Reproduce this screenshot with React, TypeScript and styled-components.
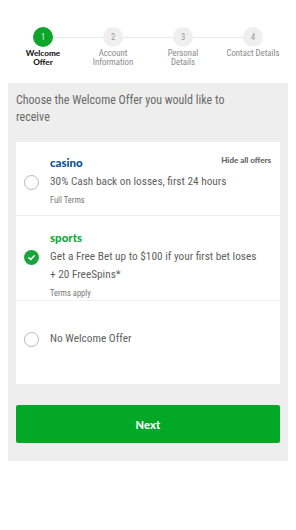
import React from "react";
import styled, { createGlobalStyle } from "styled-components";

const Global = createGlobalStyle`
  html, body { margin: 0; padding: 0; background: #fff; }
  body { font-family: "Roboto", "Lato", sans-serif; font-stretch: condensed; color: #555; }
  * { box-sizing: border-box; }
`;

const Page = styled.div`
  width: 296px;
  height: 530px;
  background: #fff;
  padding-top: 27px;
`;

const Stepper = styled.div`
  display: grid;
  grid-template-columns: repeat(4, 70px);
  padding: 0 8px;
  position: relative;
  height: 56px;
`;

const StepLine = styled.div`
  position: absolute;
  left: 43px;
  right: 43px;
  top: 10px;
  height: 1px;
  background: #e8e8e8;
`;

const Step = styled.div`
  display: flex;
  flex-direction: column;
  align-items: center;
  position: relative;
  z-index: 1;
`;

const StepCircle = styled.div<{ $active?: boolean }>`
  width: 20px;
  height: 20px;
  border-radius: 50%;
  background: ${(p) => (p.$active ? "#0fa52a" : "#efefef")};
  color: ${(p) => (p.$active ? "#d8f5dc" : "#9a9a9a")};
  font-size: 8.5px;
  display: flex;
  align-items: center;
  justify-content: center;
`;

const StepLabel = styled.div<{ $active?: boolean }>`
  margin-top: 2px;
  font-size: ${(p) => (p.$active ? "8.2px" : "8.8px")};
  line-height: 9px;
  text-align: center;
  color: ${(p) => (p.$active ? "#1a1a1a" : "#8a8a8a")};
  font-family: ${(p) => (p.$active ? '"Lato", sans-serif' : '"Roboto", sans-serif')};
  font-weight: ${(p) => (p.$active ? 900 : 400)};
  white-space: nowrap;
`;

const Panel = styled.div`
  margin: 0 8px;
  background: #eeeeee;
  padding: 9px 8px 18px;
`;

const Intro = styled.p`
  margin: 0;
  font-size: 12px;
  line-height: 16.5px;
  color: #6a6a6a;
  font-weight: 400;
`;

const Card = styled.div`
  margin-top: 17px;
  background: #fff;
`;

const Offer = styled.div<{ $h: number; $pt: number }>`
  display: grid;
  grid-template-columns: 15px 1fr;
  column-gap: 11px;
  align-content: start;
  padding: ${(p) => p.$pt}px 8px 0 8px;
  height: ${(p) => p.$h}px;
  border-bottom: 1px solid #efefef;
  position: relative;
  &:last-child { border-bottom: none; }
`;

const Radio = styled.div<{ $row?: number }>`
  grid-column: 1;
  grid-row: ${(p) => p.$row ?? 2};
  align-self: start;
  margin-top: 1.5px;
  width: 15px;
  height: 15px;
  border-radius: 50%;
  border: 1px solid #b9b9b9;
  background: #fff;
`;

const Check = styled.div`
  grid-column: 1;
  grid-row: 2;
  align-self: start;
  margin-top: 1.5px;
  width: 15px;
  height: 15px;
  border-radius: 50%;
  background: #1aa33a;
  display: flex;
  align-items: center;
  justify-content: center;
`;

const Brand = styled.div<{ $c: string }>`
  grid-column: 2;
  grid-row: 1;
  font-family: "Lato", sans-serif;
  font-weight: 900;
  font-size: 11.5px;
  line-height: 14px;
  color: ${(p) => p.$c};
  margin-bottom: 3px;
`;

const OfferText = styled.div<{ $row?: number }>`
  grid-column: 2;
  grid-row: ${(p) => p.$row ?? 2};
  font-size: 11.3px;
  line-height: 18px;
  color: #5f5f5f;
  white-space: nowrap;
`;

const Terms = styled.div`
  grid-column: 2;
  grid-row: 3;
  font-size: 8.5px;
  line-height: 10px;
  color: #777;
  margin-top: 4px;
`;

const HideAll = styled.div`
  position: absolute;
  right: 9px;
  top: 13px;
  font-family: "Lato", sans-serif;
  font-weight: 900;
  font-size: 8px;
  color: #666;
`;

const NextButton = styled.button`
  margin-top: 21px;
  width: 100%;
  height: 38px;
  border: none;
  border-radius: 2px;
  background: #03a827;
  color: #fff;
  font-family: "Lato", sans-serif;
  font-weight: 900;
  font-size: 11px;
  letter-spacing: 0.2px;
`;

const steps = [
  { n: 1, label: ["Welcome", "Offer"], active: true },
  { n: 2, label: ["Account", "Information"] },
  { n: 3, label: ["Personal", "Details"] },
  { n: 4, label: ["Contact Details"] },
];

export default function App() {
  return (
    <Page>
      <Global />
      <Stepper>
        <StepLine />
        {steps.map((s) => (
          <Step key={s.n}>
            <StepCircle $active={s.active}>{s.n}</StepCircle>
            <StepLabel $active={s.active}>
              {s.label.map((l, i) => (
                <div key={i}>{l}</div>
              ))}
            </StepLabel>
          </Step>
        ))}
      </Stepper>
      <Panel>
        <Intro>
          Choose the Welcome Offer you would like to
          <br />
          receive
        </Intro>
        <Card>
          <Offer $h={74} $pt={14}>
            <HideAll>Hide all offers</HideAll>
            <Brand $c="#0b4f8f">casino</Brand>
            <Radio />
            <OfferText>30% Cash back on losses, first 24 hours</OfferText>
            <Terms>Full Terms</Terms>
          </Offer>
          <Offer $h={85} $pt={15}>
            <Brand $c="#16a83a">sports</Brand>
            <Check>
              <svg width="9" height="9" viewBox="0 0 10 10">
                <path d="M2 5.2 L4.2 7.2 L8 3" fill="none" stroke="#fff" strokeWidth="1.6" strokeLinecap="round" strokeLinejoin="round" />
              </svg>
            </Check>
            <OfferText>
              Get a Free Bet up to $100 if your first bet loses
              <br />+ 20 FreeSpins*
            </OfferText>
            <Terms>Terms apply</Terms>
          </Offer>
          <Offer $h={83} $pt={29}>
            <Radio $row={1} />
            <OfferText $row={1}>No Welcome Offer</OfferText>
          </Offer>
        </Card>
        <NextButton>Next</NextButton>
      </Panel>
    </Page>
  );
}
